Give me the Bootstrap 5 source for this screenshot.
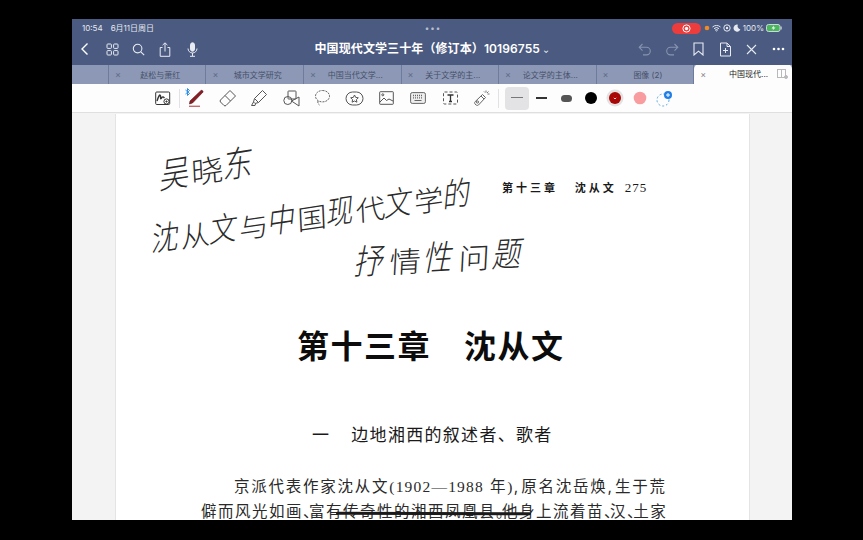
<!DOCTYPE html>
<html lang="zh">
  <head>
    <meta charset="UTF-8" />
    <meta name="viewport" content="width=device-width, initial-scale=1.0" />
    <title>中国现代文学三十年</title>
    <link href="https://cdn.jsdelivr.net/npm/bootstrap@5.3.0/dist/css/bootstrap.min.css" rel="stylesheet" />
    <style>
      html, body { height: 100%; background: #000; overflow: hidden; }
      body { font-family: "Inter", "Noto Sans CJK SC", sans-serif; }
      .app-window { width: 720px; height: 501px; margin: 19px 0 0 72px; background: #f3f3f4; overflow: hidden; }
      .status-row { height: 16px; background: #4a5a80; color: #e6e9f0; font-size: 8px; padding: 2px 10px 0 10px; }
      .status-gap { margin-right: 2px; }
      .rec-pill { width: 29px; height: 11px; border-radius: 6px; background: #ec3c3c; margin-right: 3px; }
      .nav-row { height: 30px; background: #4a5a80; color: #fff; padding: 0 0 2px 0; position: relative; }
      .nav-title { flex: 1; text-align: center; font-size: 12px; font-weight: 600; padding-left: 26px; letter-spacing: .1px; white-space: nowrap; }
      .nav-icon { width: 26.7px; display: flex; justify-content: center; }
      .tab-row { height: 19px; background: #8c98b5; }
      .tab-blank { width: 37px; border-right: 1px solid #6e7b9c; }
      .tab-item { width: 97.7px; border-right: 1px solid #6e7b9c; color: #46506a; font-size: 8px; padding-left: 6px; white-space: nowrap; }
      .tab-x { width: 10px; color: #5e6a88; font-size: 9px; line-height: 1; }
      .tab-name { flex: 1; text-align: center; padding-right: 10px; }
      .tab-active { width: 98px; height: 20px; margin-top: -1px; background: #fdfdfe; border-radius: 5px 5px 0 0; color: #1c1c1c; font-size: 8px; padding: 0 4px 0 6px; white-space: nowrap; }
      .tab-active .tab-x { color: #888; }
      .tool-row { height: 29px; background: #fdfdfe; padding-left: 75px; border-bottom: 1px solid #dfdfe2; }
      .tool-btn { width: 31.8px; height: 29px; display: flex; align-items: center; justify-content: center; flex: none; }
      .tool-sep { width: 1px; height: 19px; background: #e2e2e4; flex: none; }
      .swatch-btn { width: 24.6px; height: 29px; display: flex; align-items: center; justify-content: center; flex: none; }
      .swatch-on { background: #e3e3e6; border-radius: 4px; height: 23px; }
      .doc-area { height: 407px; overflow: hidden; padding-left: 43px; }
      .doc-page { width: 635px; height: 420px; background: #fff; border: 1px solid #e4e4e4; border-top: 0; position: relative; color: #1a1a1a; padding: 66px 101px 0 85px; margin-top: 1px; }
      .run-head { font-size: 11px; font-weight: 700; letter-spacing: 3px; height: 16px; line-height: 16px; white-space: pre; padding-left: 301px; }
      .run-head span { font-family: "Liberation Serif", serif; font-weight: 400; font-size: 13px; letter-spacing: 1px; margin-left: 8px; }
      .chap-title { font-size: 32px; font-weight: 700; margin: 126px 0 0 0; line-height: 50px; letter-spacing: 1.5px; color: #0c0c0c; white-space: pre; padding-left: 96px; }
      .chap-title span { margin-left: 33px; }
      .sect-title { font-size: 17px; font-weight: 400; margin: 50px 0 0 0; line-height: 26px; letter-spacing: 1.3px; white-space: pre; padding-left: 111px; }
      .sect-title span { margin-left: 21px; }
      .body-line { font-size: 15.5px; line-height: 25px; letter-spacing: 1.75px; white-space: nowrap; color: #2a2a2a; }
      .body-tight { letter-spacing: 1.5px; }
      .num-run { font-family: "Liberation Serif", serif; letter-spacing: 1.2px; }
      .punct-slim { letter-spacing: -9.5px; }
      .punct-comma { letter-spacing: 3px; }
      .ink-line { position: absolute; font-family: "Noto Sans CJK SC", sans-serif; font-weight: 300; color: #2b2b2b; white-space: nowrap; transform-origin: left bottom; line-height: 1; }
      .ink-line i { display: inline-block; font-style: normal; }
      .ink-line i:nth-child(odd) { transform: skewX(-14deg) scaleY(1.18); }
      .ink-line i:nth-child(even) { transform: skewX(-6deg) translateY(3px) scaleX(1.08); }
      .ink-a { left: 47px; top: 44px; font-size: 30px; transform: rotate(-9deg); letter-spacing: 2px; }
      .ink-b { left: 38px; top: 110px; font-size: 27.5px; transform: rotate(-8.5deg); letter-spacing: 2px; }
      .ink-c { left: 241px; top: 131px; font-size: 29px; transform: rotate(-3deg); letter-spacing: 5.5px; }
      .strike-mark { position: absolute; left: 220px; top: 398px; width: 195px; height: 3px; background: #1a1a1a; border-radius: 2px; transform: rotate(.2deg); }
    </style>
  </head>
  <body>
    <div class="app-window">
      <div class="status-row d-flex align-items-center">
        <span class="me-2">10:54</span><span>6月11日周日</span>
        <span class="flex-grow-1 text-center" style="padding-left: 40px; letter-spacing: 1px; opacity: .7">•••</span>
        <span class="rec-pill d-flex align-items-center justify-content-center">
          <svg width="9" height="9" viewBox="0 0 9 9"><circle cx="4.5" cy="4.5" r="3.6" fill="none" stroke="#fff"/><circle cx="4.5" cy="4.5" r="1.7" fill="#fff"/></svg>
        </span>
        <svg width="6" height="6" class="status-gap"><circle cx="3" cy="3" r="2.3" fill="#f08a24"/></svg>
        <svg width="9" height="8" viewBox="0 0 9 8" class="status-gap"><path d="M.5 3a6 6 0 0 1 8 0M2 4.6a3.8 3.8 0 0 1 5 0M4.5 7 3.4 6a1.6 1.6 0 0 1 2.2 0Z" fill="none" stroke="#e6e9f0"/></svg>
        <svg width="8" height="8" viewBox="0 0 8 8" class="status-gap"><circle cx="4" cy="4" r="3.2" fill="none" stroke="#e6e9f0"/><circle cx="4" cy="4" r="1.2" fill="#e6e9f0"/></svg>
        <svg width="8" height="8" viewBox="0 0 8 8" class="status-gap"><path d="M5 .7A3.5 3.5 0 1 0 7.4 5.2 3 3 0 0 1 5 .7Z" fill="#e6e9f0"/></svg>
        <span class="status-gap">100%</span>
        <svg width="16" height="8" viewBox="0 0 16 8"><rect x=".5" y=".5" width="13.500" height="7" rx="2" fill="#49b85a" stroke="#cfd6e2"/><rect x="14.500" y="2.500" width="1.200" height="3" fill="#cfd6e2"/><path d="M8 1.500 5.500 4.500H7.500L6.500 6.500 9.500 3.500H7.500Z" fill="#fff"/></svg>
      </div>

      <div class="nav-row d-flex align-items-center">
        <span class="nav-icon"><svg width="10" height="14" viewBox="0 0 10 14"><path d="M7.5 1.5 2 7l5.5 5.5" fill="none" stroke="#fff" stroke-width="1.4"/></svg></span>
        <span class="nav-icon"><svg width="13" height="13" viewBox="0 0 13 13" fill="none" stroke="#e8ebf2"><rect x="1" y="1" width="4.4" height="4.4" rx=".8"/><rect x="7.6" y="1" width="4.4" height="4.4" rx=".8"/><rect x="1" y="7.6" width="4.4" height="4.4" rx=".8"/><rect x="7.6" y="7.6" width="4.4" height="4.4" rx=".8"/></svg></span>
        <span class="nav-icon"><svg width="13" height="13" viewBox="0 0 13 13" fill="none" stroke="#e8ebf2" stroke-width="1.1"><circle cx="5.6" cy="5.6" r="4.3"/><path d="m8.8 8.8 3.4 3.4"/></svg></span>
        <span class="nav-icon"><svg width="12" height="15" viewBox="0 0 12 15" fill="none" stroke="#e8ebf2"><path d="M3.5 5.5H1.2v8.8h9.6V5.5H8.5M6 9.5V1M3.6 3.1 6 .8l2.4 2.3"/></svg></span>
        <span class="nav-icon"><svg width="11" height="15" viewBox="0 0 11 15" fill="none" stroke="#e8ebf2"><rect x="3.5" y=".8" width="4" height="8.4" rx="2" fill="#e8ebf2"/><path d="M1 6.5a4.5 4.5 0 0 0 9 0M5.5 11v3M3 14.3h5"/></svg></span>
        <span class="nav-title">中国现代文学三十年（修订本）10196755 <small style="font-size: 7px">⌄</small></span>
        <span class="nav-icon"><svg width="14" height="13" viewBox="0 0 14 13" fill="none" stroke="#8793b0" stroke-width="1.1"><path d="M4.5 1 1.2 4.3l3.3 3.3M1.500 4.300h7a3.800 3.800 0 0 1 0 7.600H5"/></svg></span>
        <span class="nav-icon"><svg width="14" height="13" viewBox="0 0 14 13" fill="none" stroke="#8793b0" stroke-width="1.1"><path d="m9.5 1 3.3 3.3-3.3 3.3M12.500 4.300h-7a3.800 3.800 0 0 0 0 7.600H9"/></svg></span>
        <span class="nav-icon"><svg width="11" height="14" viewBox="0 0 11 14" fill="none" stroke="#e8ebf2" stroke-width="1.1"><path d="M1 1h9v12L5.5 9.2 1 13Z"/></svg></span>
        <span class="nav-icon"><svg width="13" height="15" viewBox="0 0 13 15" fill="none" stroke="#e8ebf2"><path d="M8 1H1.5v13h10V4.5ZM8 1v3.5h3.5M6.5 6v5M4 8.5h5"/></svg></span>
        <span class="nav-icon"><svg width="11" height="11" viewBox="0 0 11 11" fill="none" stroke="#e8ebf2" stroke-width="1.1"><path d="m1 1 9 9M10 1l-9 9"/></svg></span>
        <span class="nav-icon"><svg width="13" height="4" viewBox="0 0 13 4" fill="#fff"><circle cx="2" cy="2" r="1.3"/><circle cx="6.5" cy="2" r="1.3"/><circle cx="11" cy="2" r="1.3"/></svg></span>
      </div>

      <div class="tab-row d-flex">
        <div class="tab-blank"></div>
        <div class="tab-item d-flex align-items-center"><span class="tab-x">×</span><span class="tab-name">赵松与萧红</span></div>
        <div class="tab-item d-flex align-items-center"><span class="tab-x">×</span><span class="tab-name">城市文学研究</span></div>
        <div class="tab-item d-flex align-items-center"><span class="tab-x">×</span><span class="tab-name">中国当代文学...</span></div>
        <div class="tab-item d-flex align-items-center"><span class="tab-x">×</span><span class="tab-name">关于文学的主...</span></div>
        <div class="tab-item d-flex align-items-center"><span class="tab-x">×</span><span class="tab-name">论文学的主体...</span></div>
        <div class="tab-item d-flex align-items-center"><span class="tab-x">×</span><span class="tab-name">图像 (2)</span></div>
        <div class="tab-active d-flex align-items-center ms-auto">
          <span class="tab-x">×</span><span class="tab-name" style="padding-left: 14px; padding-right: 4px">中国现代...</span>
          <svg width="11" height="10" viewBox="0 0 11 10" fill="none" stroke="#b9b9bd"><rect x=".5" y=".5" width="8" height="8"/><path d="M4.5.5v8"/><circle cx="9" cy="8" r="1.5" fill="#b9b9bd"/></svg>
        </div>
      </div>

      <div class="tool-row d-flex align-items-center">
        <span class="tool-btn"><svg width="16" height="15" viewBox="0 0 16 15" fill="none" stroke="#333"><rect x=".7" y="1" width="14" height="12.5" rx="1"/><path d="M2 10c2-6 3-7 3.500-5s-.5 4 1 2 2-1 3 0" stroke-width="1.400"/><circle cx="11.500" cy="10.500" r="2.600" fill="#fff"/><path d="M10.300 10.500h2.400M11.500 9.300v2.400" stroke-width=".8"/></svg></span>
        <span class="tool-sep"></span>
        <span class="tool-btn" style="position: relative">
          <svg width="18" height="20" viewBox="0 0 18 20"><path d="M3 13 14 2.500c1-.8 2.600.8 1.800 1.800L5.500 15 2.500 16Z" fill="#8c1c24" stroke="#4a1014" stroke-width=".6"/><path d="M2 18.300h11" stroke="#c46a6e" stroke-width="1.400"/></svg>
          <svg width="5" height="8" viewBox="0 0 5 8" style="position: absolute; left: 5px; top: 4px"><path d="m.5 2 4 3.500L2.500 7.500V.5l2 2-4 3.500" fill="none" stroke="#2f8fe8"/></svg>
        </span>
        <span class="tool-btn"><svg width="19" height="19" viewBox="0 0 19 19" fill="none" stroke="#555"><path d="m12 1.500 5.500 5.500-9.500 9.500a1.500 1.500 0 0 1-2 0l-3.500-3.500a1.500 1.500 0 0 1 0-2ZM7 6.500l5.500 5.500"/></svg></span>
        <span class="tool-btn"><svg width="18" height="18" viewBox="0 0 18 18" fill="none" stroke="#555"><path d="m12.500 1.500 4 4-8 8-4-4ZM4.500 9.500 3.500 13l1.500 1.500 3.500-1M3.500 13 1.500 16.500h3.500l.5-1.500"/></svg></span>
        <span class="tool-btn"><svg width="17" height="17" viewBox="0 0 17 17" fill="none" stroke="#555"><rect x="5" y="1" width="8" height="8" rx=".6"/><circle cx="4.800" cy="10.500" r="4"/><path d="m8.500 10.500 7.500-4v9Z" transform="translate(0 .5)"/></svg></span>
        <span class="tool-btn"><svg width="17" height="18" viewBox="0 0 17 18" fill="none" stroke="#666" stroke-dasharray="2 1"><path d="M8.500 1.500c4 0 7 2.500 7 5.700s-3 5.700-7 5.700-7-2.500-7-5.700 3-5.700 7-5.700ZM4 12c-.5 1.500 0 3 1.500 4"/></svg></span>
        <span class="tool-btn"><svg width="19" height="15" viewBox="0 0 19 15" fill="none" stroke="#555"><rect x="1" y="1" width="17" height="13" rx="6.500"/><path d="m9.500 4 1.200 2.400 2.600.4-1.900 1.800.5 2.600-2.400-1.200-2.400 1.200.5-2.600-1.900-1.800 2.600-.4Z"/></svg></span>
        <span class="tool-btn"><svg width="15" height="14" viewBox="0 0 15 14" fill="none" stroke="#555"><rect x=".7" y=".7" width="13.600" height="12.600" rx=".6"/><circle cx="3.800" cy="3.800" r="1"/><path d="m1 11 4-4 2.500 2.500 2.500-1.500 4 2"/></svg></span>
        <span class="tool-btn"><svg width="16" height="12" viewBox="0 0 16 12"><rect x=".6" y=".6" width="14.800" height="10.800" rx="1.600" fill="#eee" stroke="#666"/><path d="M3 3.500h10M3 5.800h10" stroke="#666" stroke-dasharray="1 1" stroke-width="1.300"/><path d="M4.500 8.500h7" stroke="#666"/></svg></span>
        <span class="tool-btn"><svg width="17" height="14" viewBox="0 0 17 14" fill="none" stroke="#555"><rect x="1.500" y="1" width="14" height="12" rx="1" stroke-dasharray="3 2"/><path d="M5.500 4h6M8.500 4v6.500M7 10.500h3" stroke="#333" stroke-width="1.300"/></svg></span>
        <span class="tool-btn"><svg width="18" height="18" viewBox="0 0 18 18" fill="none" stroke="#666"><path d="m9.500 5.500 3 3-7 7.500c-.8.600-1.700.600-2.400 0l-1-1c-.6-.7-.6-1.600 0-2.300ZM8 7l3 3"/><circle cx="4.500" cy="13" r="1.100"/><path d="M13 1.500v2M16.500 5h-2M15.500 2.500 14 4M11 2.500l1 1" stroke-width=".9"/></svg></span>
        <span class="tool-sep" style="margin-right: 6px"></span>
        <span class="swatch-btn swatch-on"><svg width="12" height="2"><rect width="12" height="1" fill="#777"/></svg></span>
        <span class="swatch-btn"><svg width="11" height="2"><rect width="11" height="2" fill="#333"/></svg></span>
        <span class="swatch-btn"><svg width="11" height="7"><rect width="11" height="7" rx="3.500" fill="#555"/></svg></span>
        <span class="swatch-btn"><svg width="14" height="14"><circle cx="7" cy="7" r="6" fill="#000"/></svg></span>
        <span class="swatch-btn"><svg width="18" height="18"><circle cx="9" cy="9" r="8.500" fill="#e2e2e2"/><circle cx="9" cy="9" r="6" fill="#a90606"/><path d="m7.800 8.800 1.200 1.200 1.200-1.200" fill="none" stroke="#fff" stroke-width=".8"/></svg></span>
        <span class="swatch-btn"><svg width="14" height="14"><circle cx="7" cy="7" r="6.300" fill="#f89ca0"/></svg></span>
        <span class="swatch-btn"><svg width="17" height="17" viewBox="0 0 17 17"><circle cx="7" cy="10" r="6" fill="none" stroke="#5aa6e0" stroke-dasharray="2 2"/><circle cx="12" cy="5" r="4" fill="#1f7fe6"/><path d="M10 5h4M12 3v4" stroke="#fff"/></svg></span>
      </div>

      <div class="doc-area">
        <div class="doc-page">
          <div class="run-head">第十三章   沈从文<span>275</span></div>
          <h1 class="chap-title">第十三章<span>沈从文</span></h1>
          <h2 class="sect-title">一<span>边地湘西的叙述者、歌者</span></h2>
          <p class="body-line mb-0" style="margin-top: 26px; margin-left: 33px">京派代表作家沈从文<span class="num-run">(1902—1988</span> 年<span class="num-run">)</span><span class="punct-comma">,</span>原名沈岳焕<span class="punct-comma">,</span>生于荒</p>
          <p class="body-line body-tight mb-0">僻而风光如画<span class="punct-slim">、</span>富有传奇性的湘西凤凰县<span class="punct-slim">。</span>他身上流着苗<span class="punct-slim">、</span>汉<span class="punct-slim">、</span>土家</p>
          <div class="strike-mark"></div>
          <div class="ink-line ink-a"><i>吴</i><i>晓</i><i>东</i></div>
          <div class="ink-line ink-b"><i>沈</i><i>从</i><i>文</i><i>与</i><i>中</i><i>国</i><i>现</i><i>代</i><i>文</i><i>学</i><i>的</i></div>
          <div class="ink-line ink-c"><i>抒</i><i>情</i><i>性</i><i>问</i><i>题</i></div>
        </div>
      </div>
    </div>
    <script src="https://cdn.jsdelivr.net/npm/bootstrap@5.3.0/dist/js/bootstrap.bundle.min.js"></script>
  </body>
</html>
